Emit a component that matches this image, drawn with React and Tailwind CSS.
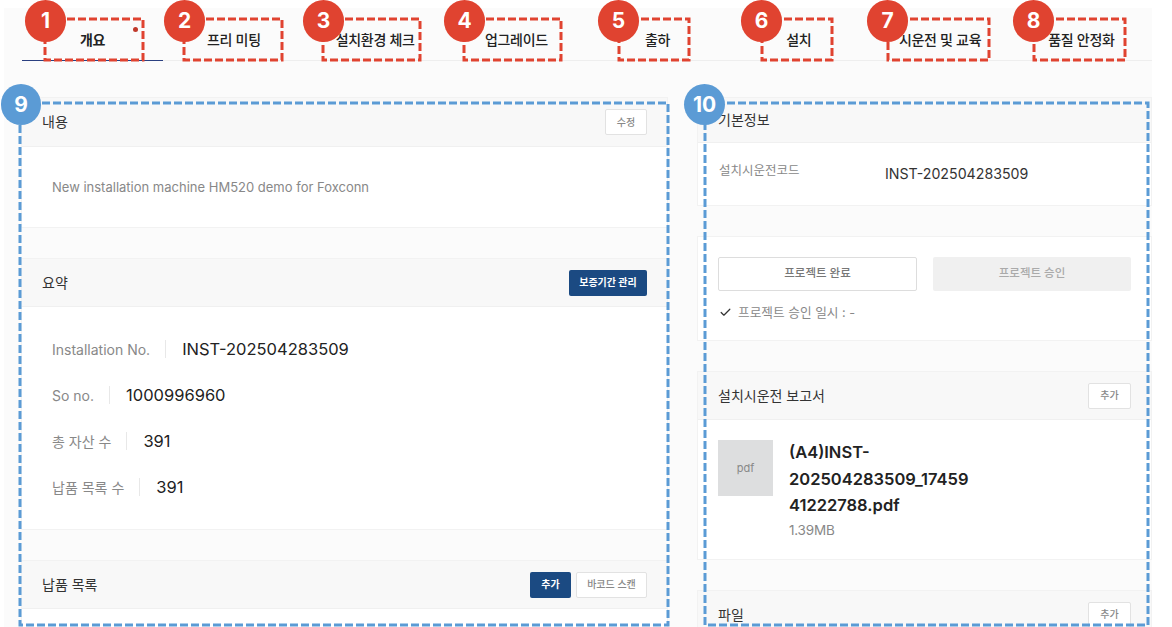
import { Check } from "lucide-react";

const tabs = ["개요", "프리 미팅", "설치환경 체크", "업그레이드", "출하", "설치", "시운전 및 교육", "품질 안정화"];

// numbered callouts laid over the screenshot
const redMarks = [
  { n: 1, x: 45, w: 98, dot: "left-[25px]" },
  { n: 2, x: 184, w: 98, dot: "left-[164px]" },
  { n: 3, x: 323, w: 97, dot: "left-[303px]" },
  { n: 4, x: 464, w: 97, dot: "left-[444px]" },
  { n: 5, x: 619, w: 70, dot: "left-[598px]" },
  { n: 6, x: 762, w: 70, dot: "left-[741px]" },
  { n: 7, x: 888, w: 101, dot: "left-[867px]" },
  { n: 8, x: 1034, w: 91, dot: "left-[1013px]" },
];

const summary = [
  { label: "Installation No.", value: "INST-202504283509" },
  { label: "So no.", value: "1000996960" },
  { label: "총 자산 수", value: "391" },
  { label: "납품 목록 수", value: "391" },
];

function OutlineButton({ children, className = "" }) {
  return (
    <button className={`h-[26px] bg-white border border-[#e2e2e2] rounded-[2px] text-[10px] font-medium text-[#888] ${className}`}>
      {children}
    </button>
  );
}

function NavyButton({ children, className = "" }) {
  return (
    <button className={`h-[26px] bg-[#1b4a82] rounded-[2px] text-[10px] font-bold text-white ${className}`}>
      {children}
    </button>
  );
}

function CardHeader({ title, children, className = "h-[48px]" }) {
  return (
    <div className={`flex items-center justify-between px-[20px] bg-[#f8f8f8] border-b border-[#f0f0f0] ${className}`}>
      <span className="text-[14px] text-[#333] -mt-px">{title}</span>
      <div className="flex gap-[5px]">{children}</div>
    </div>
  );
}

export default function App() {
  return (
    <div
      className="relative w-[1172px] h-[627px] overflow-hidden bg-white"
      style={{ fontFamily: 'Inter, "Noto Sans CJK KR", sans-serif' }}
    >
      <div className="ml-[4px] mt-[8px] w-[1148px] h-[619px] bg-[#fbfbfb] pl-[17px] overflow-hidden">
        {/* Tabs */}
        <div className="grid grid-cols-8 ml-px h-[53px] border-b border-[#eeeeee]">
          {tabs.map((tab, i) => (
            <div
              key={tab}
              className={`relative flex items-center justify-center pt-[10px] text-[14px] tracking-[-0.3px] text-[#222] ${
                i === 0 ? "font-bold border-b border-[#2a3f80] h-[53px]" : "font-medium"
              }`}
            >
              {tab}
              {i === 0 && <span className="absolute left-[111px] top-[19px] w-[5px] h-[5px] rounded-full bg-[#c0392b]" />}
            </div>
          ))}
        </div>

        <div className="flex gap-[29px] mt-[36px]">
          {/* Left column */}
          <div className="w-[647px] shrink-0 flex flex-col gap-[30px]">
            <section className="bg-white border border-[#f2f2f2]">
              <CardHeader title="내용" className="h-[49px]">
                <OutlineButton className="w-[42px]">수정</OutlineButton>
              </CardHeader>
              <p className="h-[80px] pl-[30px] pt-[31px] text-[13px] text-[#888]">
                New installation machine HM520 demo for Foxconn
              </p>
            </section>

            <section className="bg-white border border-[#f2f2f2]">
              <CardHeader title="요약">
                <NavyButton className="w-[78px]">보증기간 관리</NavyButton>
              </CardHeader>
              <div className="flex flex-col gap-[24px] h-[222px] pl-[30px] pt-[31px]">
                {summary.map((row) => (
                  <div key={row.label} className="flex items-center h-[22px]">
                    <span className="text-[14px] text-[#888]">{row.label}</span>
                    <span className="w-px h-[18px] bg-[#e8e8e8] ml-[15px] mr-[16px]" />
                    <span className="text-[16.5px] text-[#222]">{row.value}</span>
                  </div>
                ))}
              </div>
            </section>

            <section className="bg-white border border-[#f2f2f2] h-[120px]">
              <CardHeader title="납품 목록">
                <NavyButton className="w-[41px]">추가</NavyButton>
                <OutlineButton className="w-[71px]">바코드 스캔</OutlineButton>
              </CardHeader>
            </section>
          </div>

          {/* Right column */}
          <div className="w-[455px] shrink-0 flex flex-col gap-[30px]">
            <section className="bg-white border border-[#f2f2f2]">
              <CardHeader title="기본정보" className="h-[45px]" />
              <div className="flex items-center h-[62px] pl-[21px] text-[#333]">
                <span className="w-[166px] text-[12.5px] text-[#888] -mt-[5px]">설치시운전코드</span>
                <span className="text-[14.2px]">INST-202504283509</span>
              </div>
            </section>

            <section className="bg-white border border-[#f2f2f2] h-[105px] px-[20px] pt-[20px]">
              <div className="flex gap-[16px]">
                <button className="w-[199px] h-[34px] bg-white border border-[#dddddd] rounded-[2px] text-[11.5px] font-medium text-[#777]">
                  프로젝트 완료
                </button>
                <button className="w-[198px] h-[34px] bg-[#f0f0f0] rounded-[2px] text-[11.5px] font-medium text-[#aaa]">
                  프로젝트 승인
                </button>
              </div>
              <div className="flex items-center mt-[12px] pl-px text-[12.7px] text-[#888]">
                <Check size={13} strokeWidth={2.25} className="text-[#333] mr-[6px]" />
                프로젝트 승인 일시 : -
              </div>
            </section>

            <section className="bg-white border border-[#f2f2f2] h-[189px]">
              <CardHeader title="설치시운전 보고서">
                <OutlineButton className="w-[43px]">추가</OutlineButton>
              </CardHeader>
              <div className="flex pl-[20px] pt-[20px]">
                <div className="flex items-center justify-center w-[55px] h-[56px] bg-[#dddedf] text-[11px] text-[#888]">
                  pdf
                </div>
                <div className="ml-[16px] -mt-[1px]">
                  <p className="text-[16.5px] leading-[26.5px] font-semibold text-[#222]">
                    (A4)INST-
                    <br />
                    202504283509_17459
                    <br />
                    41222788.pdf
                  </p>
                  <p className="text-[13.5px] tracking-[-0.2px] text-[#888] mt-px">1.39MB</p>
                </div>
              </div>
            </section>

            <section className="bg-white border border-[#f2f2f2] h-[80px]">
              <CardHeader title="파일">
                <OutlineButton className="w-[43px]">추가</OutlineButton>
              </CardHeader>
            </section>
          </div>
        </div>
      </div>

      {/* Dashed callout frames */}
      <svg className="absolute inset-0 pointer-events-none" width="1172" height="627" fill="none">
        {redMarks.map((m) => (
          <rect key={m.n} x={m.x} y="19" width={m.w} height="41" stroke="#e04330" strokeWidth="3" strokeDasharray="8 3" />
        ))}
        <rect x="20" y="103" width="648" height="522" stroke="#5b9bd5" strokeWidth="3" strokeDasharray="8 3" />
        <rect x="705" y="103" width="443" height="522" stroke="#5b9bd5" strokeWidth="3" strokeDasharray="8 3" />
      </svg>

      {/* Number badges */}
      {redMarks.map((m) => (
        <div
          key={m.n}
          className={`absolute top-0 w-[41px] h-[42px] rounded-full bg-[#e04330] flex items-center justify-center text-white text-[21px] font-bold ${m.dot}`}
        >
          {m.n}
        </div>
      ))}
      <div className="absolute left-px top-[84px] w-[40px] h-[41px] rounded-full bg-[#5b9bd5] flex items-center justify-center text-white text-[21px] font-bold">
        9
      </div>
      <div className="absolute left-[684px] top-[84px] w-[41px] h-[41px] rounded-full bg-[#5b9bd5] flex items-center justify-center text-white text-[21px] font-bold">
        10
      </div>
    </div>
  );
}
